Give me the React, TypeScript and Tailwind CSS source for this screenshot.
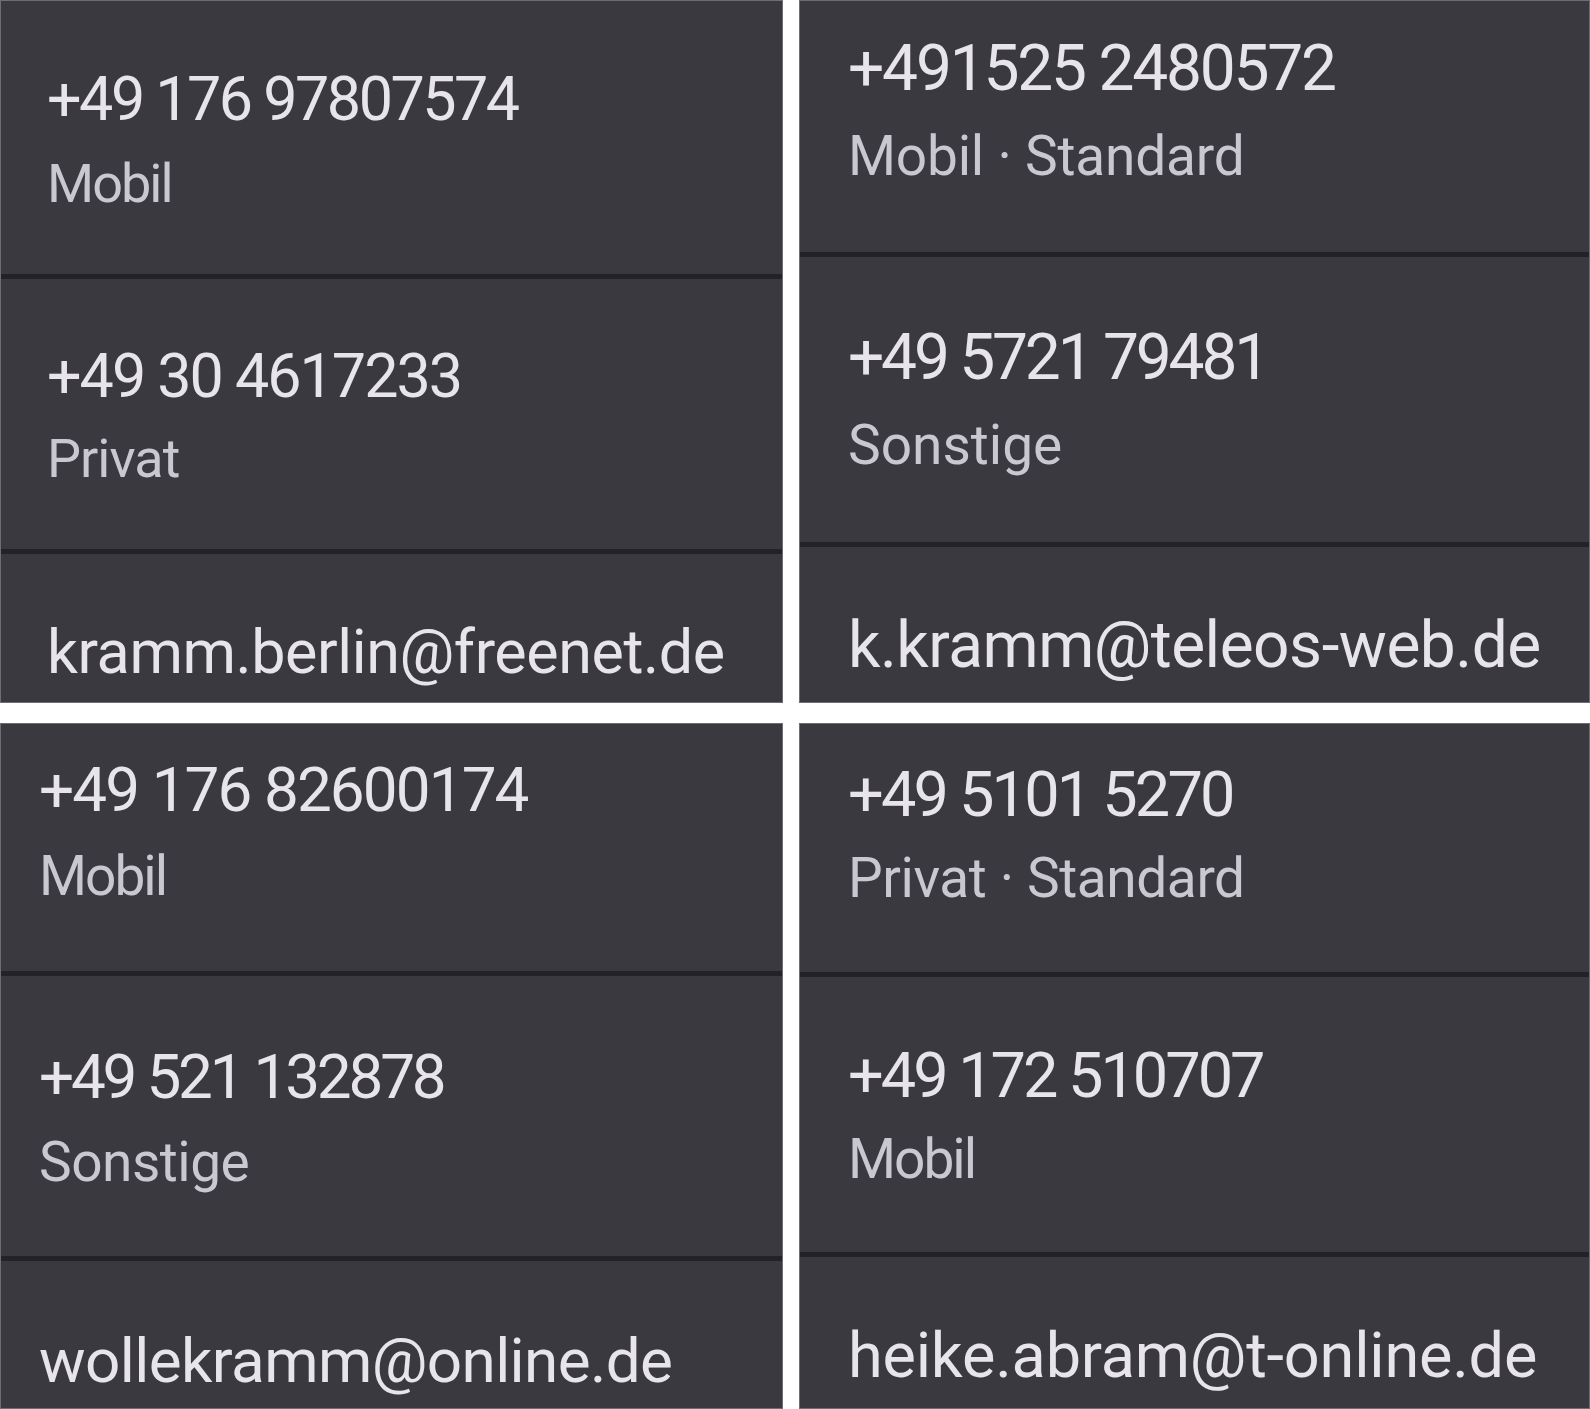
import React from 'react';

type Row = {
  box: string;
  phone: string;
  track: string;
  label: string;
  labelTrack: string;
  gap: string;
};

type Panel = {
  pad: string;
  phoneSize: string;
  labelSize: string;
  rows: Row[];
  emailBox: string;
  email: string;
};

const panels: Panel[] = [
  {
    pad: 'pl-[46px]',
    phoneSize: 'text-[61px] leading-[61px]',
    labelSize: 'text-[54px] leading-[54px]',
    rows: [
      { box: 'h-[273px] pt-[68px]', phone: '+49 176 97807574', track: 'tracking-[-2.5px]', label: 'Mobil', labelTrack: 'tracking-[-2px]', gap: 'mt-[27px]' },
      { box: 'h-[270px] pt-[67px]', phone: '+49 30 4617233', track: 'tracking-[-2px]', label: 'Privat', labelTrack: 'tracking-[-1px]', gap: 'mt-[25px]' },
    ],
    emailBox: 'pt-[68px] text-[61px] leading-[61px] tracking-[-0.4px]',
    email: 'kramm.berlin@freenet.de',
  },
  {
    pad: 'pl-[48px]',
    phoneSize: 'text-[64px] leading-[64px]',
    labelSize: 'text-[55px] leading-[55px]',
    rows: [
      { box: 'h-[251px] pt-[36px]', phone: '+491525 2480572', track: 'tracking-[-2.2px]', label: 'Mobil · Standard', labelTrack: 'tracking-[-0.2px]', gap: 'mt-[28px]' },
      { box: 'h-[285px] pt-[69px]', phone: '+49 5721 79481', track: 'tracking-[-3.2px]', label: 'Sonstige', labelTrack: 'tracking-normal', gap: 'mt-[28px]' },
    ],
    emailBox: 'pt-[67px] text-[64px] leading-[64px] tracking-[-0.5px]',
    email: 'k.kramm@teleos-web.de',
  },
  {
    pad: 'pl-[38px]',
    phoneSize: 'text-[62px] leading-[62px]',
    labelSize: 'text-[55px] leading-[55px]',
    rows: [
      { box: 'h-[247px] pt-[35px]', phone: '+49 176 82600174', track: 'tracking-[-1.9px]', label: 'Mobil', labelTrack: 'tracking-[-2px]', gap: 'mt-[28px]' },
      { box: 'h-[280px] pt-[70px]', phone: '+49 521 132878', track: 'tracking-[-3.2px]', label: 'Sonstige', labelTrack: 'tracking-[-0.5px]', gap: 'mt-[27px]' },
    ],
    emailBox: 'pt-[69px] text-[62px] leading-[62px] tracking-[-0.6px]',
    email: 'wollekramm@online.de',
  },
  {
    pad: 'pl-[48px]',
    phoneSize: 'text-[63px] leading-[63px]',
    labelSize: 'text-[55px] leading-[55px]',
    rows: [
      { box: 'h-[248px] pt-[39px]', phone: '+49 5101 5270', track: 'tracking-[-2.8px]', label: 'Privat · Standard', labelTrack: 'tracking-[-0.4px]', gap: 'mt-[25px]' },
      { box: 'h-[275px] pt-[67px]', phone: '+49 172 510707', track: 'tracking-[-3px]', label: 'Mobil', labelTrack: 'tracking-[-2px]', gap: 'mt-[25px]' },
    ],
    emailBox: 'pt-[67px] text-[63px] leading-[63px] tracking-[-0.2px]',
    email: 'heike.abram@t-online.de',
  },
];

function ContactPanel({ panel }: { panel: Panel }) {
  return (
    <div className="flex flex-col overflow-hidden bg-[#3a393f] border border-[#6e6d73]">
      {panel.rows.map((row) => (
        <React.Fragment key={row.phone}>
          <div className={`${row.box} ${panel.pad} shrink-0`}>
            <div className={`${panel.phoneSize} ${row.track} text-[#e7e5eb] whitespace-nowrap`}>{row.phone}</div>
            <div className={`${panel.labelSize} ${row.labelTrack} ${row.gap} text-[#c9c7cf] whitespace-nowrap`}>
              {row.label}
            </div>
          </div>
          <div className="h-[5px] shrink-0 bg-[#232228]" />
        </React.Fragment>
      ))}
      <div className={`${panel.emailBox} ${panel.pad} flex-1 text-[#e7e5eb] whitespace-nowrap`}>{panel.email}</div>
    </div>
  );
}

export default function App() {
  return (
    <div className="w-[1590px] h-[1409px] bg-white font-['Roboto',sans-serif]">
      <div className="grid grid-cols-[783px_791px] grid-rows-[703px_686px] gap-x-[16px] gap-y-[20px]">
        {panels.map((p) => (
          <ContactPanel key={p.email} panel={p} />
        ))}
      </div>
    </div>
  );
}
